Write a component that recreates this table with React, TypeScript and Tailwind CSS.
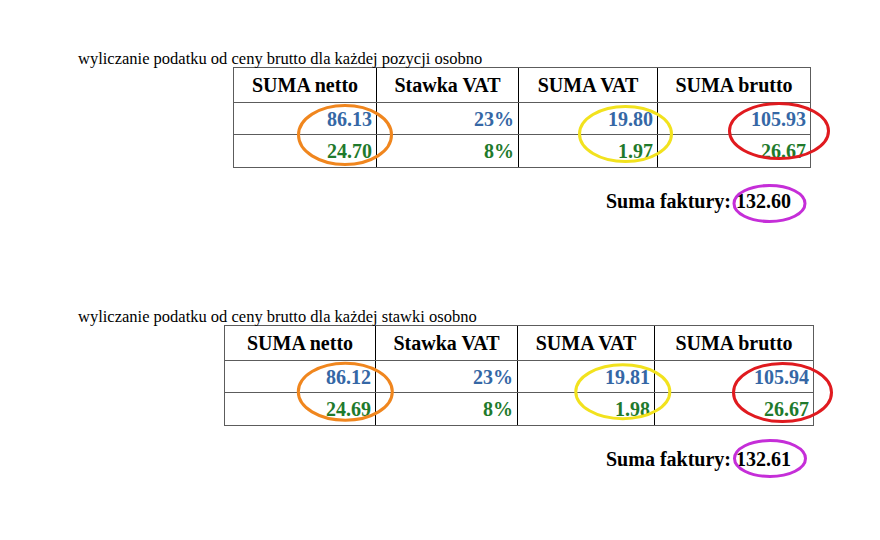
// Porównanie dwóch sposobów liczenia VAT od ceny brutto
type Row = { netto: string; rate: string; vat: string; brutto: string; color: string }

type Section = {
  caption: string
  rows: Row[]
  total: string
}

const BLUE = 'text-[#3567a5]'
const GREEN = 'text-[#1f7a2c]'

const sections: Section[] = [
  {
    caption: 'wyliczanie podatku od ceny brutto dla każdej pozycji osobno',
    rows: [
      { netto: '86.13', rate: '23%', vat: '19.80', brutto: '105.93', color: BLUE },
      { netto: '24.70', rate: '8%', vat: '1.97', brutto: '26.67', color: GREEN },
    ],
    total: '132.60',
  },
  {
    caption: 'wyliczanie podatku od ceny brutto dla każdej stawki osobno',
    rows: [
      { netto: '86.12', rate: '23%', vat: '19.81', brutto: '105.94', color: BLUE },
      { netto: '24.69', rate: '8%', vat: '1.98', brutto: '26.67', color: GREEN },
    ],
    total: '132.61',
  },
]

const headers = ['SUMA netto', 'Stawka VAT', 'SUMA VAT', 'SUMA brutto']

// układ kolumn każdej tabeli (tabele nie są identyczne)
const layouts = [
  { offset: 'ml-[233px]', cols: 'grid-cols-[142px_142px_139px_153px]' },
  { offset: 'ml-[224px]', cols: 'grid-cols-[150px_142px_137px_159px]' },
]

function VatTable({ rows, offset, cols }: { rows: Row[]; offset: string; cols: string }) {
  return (
    <div className={`${offset} w-fit border border-[#5c5c5c]`}>
      <div className={`grid ${cols} h-[34px]`}>
        {headers.map((h, i) => (
          <div
            key={h}
            className={`flex items-center justify-center text-[20px] font-bold text-black ${
              i > 0 ? 'border-l border-black' : ''
            }`}
          >
            {h}
          </div>
        ))}
      </div>
      {rows.map((r, ri) => (
        <div
          key={ri}
          className={`grid ${cols} border-t border-[#5c5c5c] ${ri === 0 ? 'h-[32px]' : 'h-[33px]'}`}
        >
          {[r.netto, r.rate, r.vat, r.brutto].map((v, i) => (
            <div
              key={i}
              className={`flex items-center justify-end pr-1 text-[20px] font-bold ${r.color} ${
                i > 0 ? 'border-l border-black' : ''
              }`}
            >
              {v}
            </div>
          ))}
        </div>
      ))}
    </div>
  )
}

// odręczne zaznaczenia (elipsy) nałożone na tabele
function Marks() {
  const e = [
    { cx: 345, cy: 135, rx: 46.5, ry: 29.5, c: '#f0861e' },
    { cx: 625.5, cy: 134, rx: 46, ry: 27.5, c: '#f2e21e' },
    { cx: 779, cy: 131, rx: 49.5, ry: 27.5, c: '#e01a1f' },
    { cx: 769.5, cy: 203.5, rx: 35.5, ry: 18, c: '#c52ed8' },
    { cx: 345.3, cy: 391.7, rx: 47, ry: 28.5, c: '#f0861e' },
    { cx: 622.8, cy: 391.7, rx: 47, ry: 27, c: '#f2e21e' },
    { cx: 782.5, cy: 392.5, rx: 49, ry: 29, c: '#e01a1f' },
    { cx: 770, cy: 458.5, rx: 35.5, ry: 18, c: '#c52ed8' },
  ]
  return (
    <svg className="pointer-events-none absolute left-0 top-0" width="880" height="540">
      {e.map((m, i) => (
        <ellipse key={i} cx={m.cx} cy={m.cy} rx={m.rx} ry={m.ry} fill="none" stroke={m.c} strokeWidth="3" />
      ))}
    </svg>
  )
}

export default function App() {
  return (
    <div className="relative h-[540px] w-[880px] overflow-hidden bg-white pt-[50px] font-['Liberation_Serif',serif] text-black">
      {sections.map((s, si) => (
        <div key={si} className={si === 0 ? 'mb-[95px]' : ''}>
          <div className="pl-[78px] text-[16.5px] leading-[17px]">{s.caption}</div>
          <VatTable rows={s.rows} offset={layouts[si].offset} cols={layouts[si].cols} />
          <div className="mt-[22px] flex w-[791px] justify-end text-[20px] font-bold leading-[23px]">
            Suma faktury: {s.total}
          </div>
        </div>
      ))}
      <Marks />
    </div>
  )
}
